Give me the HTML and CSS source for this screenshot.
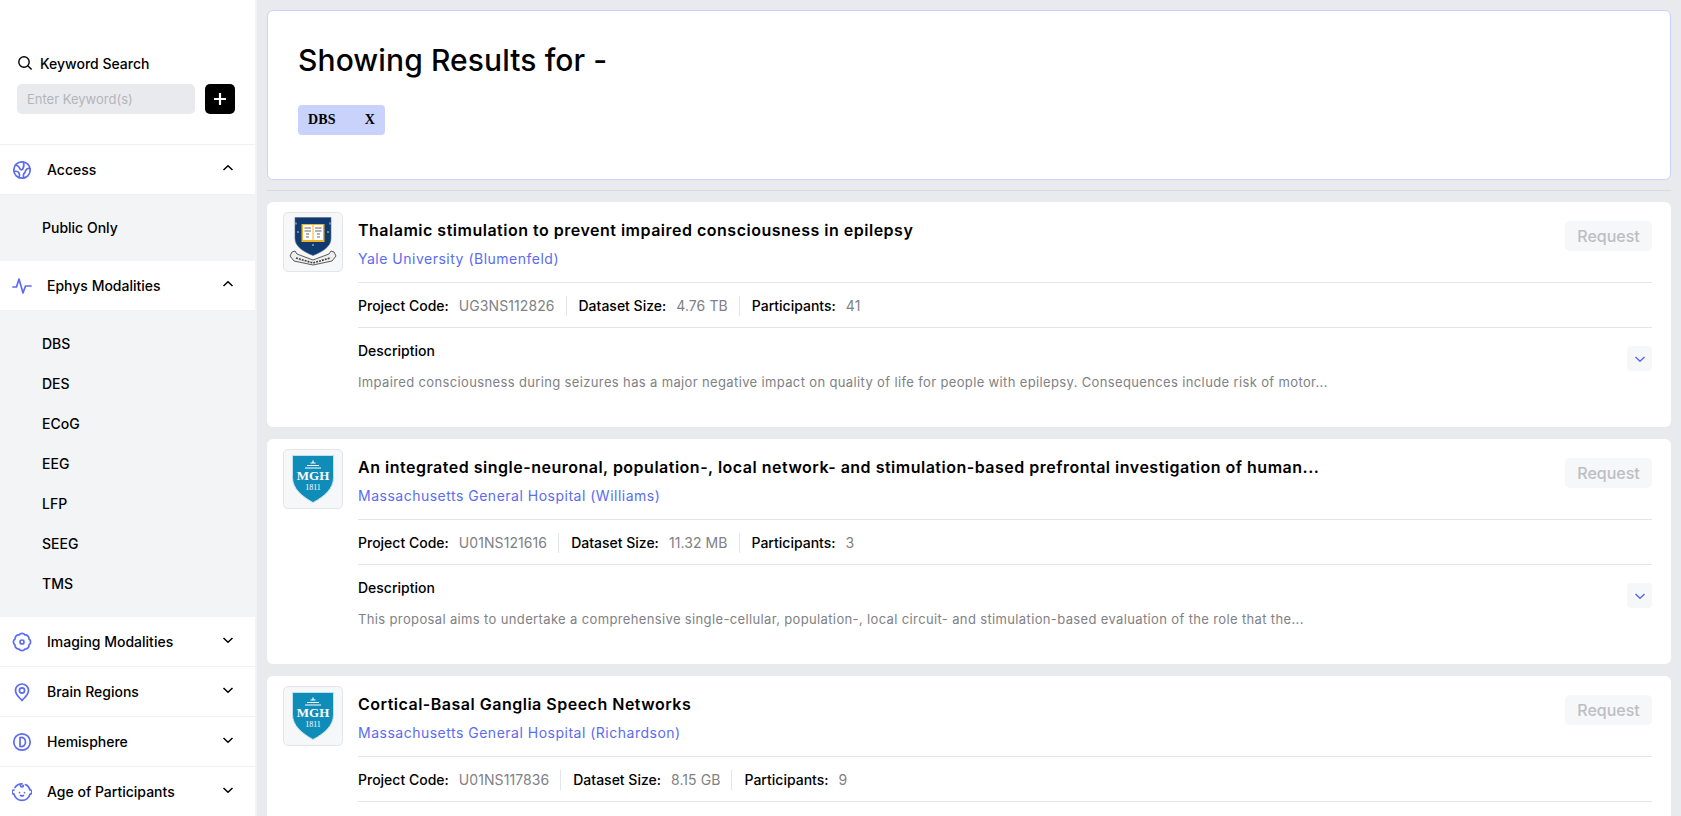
FILE: index.html
```html
<!DOCTYPE html>
<html lang="en">
<head>
    <meta charset="UTF-8">
    <title>Search Results</title>
    <link rel="stylesheet" href="styles.css">
</head>
<body>
    <div class="app">
        <aside class="sidebar">
            <div class="search">
                <div class="search-label">
                    <svg class="search-icon" viewBox="0 0 16 16" width="16" height="16"><circle cx="7" cy="7" r="5.2"/><path d="M11 11l3.6 3.6"/></svg>
                    Keyword Search
                </div>
                <div class="search-row">
                    <input class="search-input" type="text" placeholder="Enter Keyword(s)">
                    <button class="add-btn" type="button"><svg viewBox="0 0 14 14" width="14" height="14"><path d="M7 1v12M1 7h12"/></svg></button>
                </div>
            </div>

            <div class="filter">
                <svg class="filter-icon" viewBox="0 0 20 20"><circle cx="10" cy="10" r="8.2"/><path d="M3.5 5c2 .5 3.5 1 4 3s2.5 2.5 3.5.5 1-4.500.5-6.500M18 8.500c-2-.5-4 .5-4.500 2.500s-1.500 2-2 3.500 0 2.500.5 3.500M2 11.500c2-.5 4-.5 5 1.500s.5 3.500 0 4.500"/></svg>
                <span class="filter-name">Access</span>
                <svg class="chev" viewBox="0 0 12 8"><path d="M1.5 6L6 1.8 10.5 6"/></svg>
            </div>
            <div class="filter-items">
                <div class="filter-item">Public Only</div>
            </div>

            <div class="filter">
                <svg class="filter-icon" viewBox="0 0 20 20"><path d="M1 11h3.500L7 3l4 14 2.500-7H19"/></svg>
                <span class="filter-name">Ephys Modalities</span>
                <svg class="chev" viewBox="0 0 12 8"><path d="M1.5 6L6 1.8 10.5 6"/></svg>
            </div>
            <div class="filter-items">
                <div class="filter-item">DBS</div>
                <div class="filter-item">DES</div>
                <div class="filter-item">ECoG</div>
                <div class="filter-item">EEG</div>
                <div class="filter-item">LFP</div>
                <div class="filter-item">SEEG</div>
                <div class="filter-item">TMS</div>
            </div>

            <div class="filter">
                <svg class="filter-icon" viewBox="0 0 20 20"><path d="M7 3A3.600 3.600 0 0 1 13 3 3.600 3.600 0 0 1 17 7 3.600 3.600 0 0 1 17 13 3.600 3.600 0 0 1 13 17 3.600 3.600 0 0 1 7 17 3.600 3.600 0 0 1 3 13 3.600 3.600 0 0 1 3 7 3.600 3.600 0 0 1 7 3z"/><circle cx="10" cy="10" r="2"/></svg>
                <span class="filter-name">Imaging Modalities</span>
                <svg class="chev" viewBox="0 0 12 8"><path d="M1.5 2L6 6.2 10.5 2"/></svg>
            </div>
            <div class="filter">
                <svg class="filter-icon" viewBox="0 0 20 20"><path d="M10 18.500c-1.500-2-6.500-5.500-6.500-10a6.500 6.500 0 0 1 13 0c0 4.500-5 8-6.500 10z"/><circle cx="10" cy="8.500" r="2.600"/></svg>
                <span class="filter-name">Brain Regions</span>
                <svg class="chev" viewBox="0 0 12 8"><path d="M1.5 2L6 6.2 10.5 2"/></svg>
            </div>
            <div class="filter">
                <svg class="filter-icon" viewBox="0 0 20 20"><circle cx="10" cy="10" r="8.2"/><path d="M8 5.500c3.500-.5 5.500 1.500 5.500 4.500s-2 5-5.500 4.500zM8 5.500v9"/></svg>
                <span class="filter-name">Hemisphere</span>
                <svg class="chev" viewBox="0 0 12 8"><path d="M1.5 2L6 6.2 10.5 2"/></svg>
            </div>
            <div class="filter">
                <svg class="filter-icon" viewBox="0 0 20 20"><path d="M3 5.500A8.200 8.200 0 0 1 10 1.800c-2 .5-2 3 0 3.200 1.200 0 1.500-1 1-1.600M13.500 2.600a8.200 8.200 0 0 1 4.500 5.400 2 2 0 0 1 0 4 8.200 8.200 0 0 1-16 0 2 2 0 0 1 0-4"/><path d="M7.500 10.500v.1M12.500 10.500v.1M8.500 13.500c1 .6 2 .6 3 0"/></svg>
                <span class="filter-name">Age of Participants</span>
                <svg class="chev" viewBox="0 0 12 8"><path d="M1.5 2L6 6.2 10.5 2"/></svg>
            </div>
        </aside>

        <main class="main">
            <section class="results-head">
                <h1>Showing Results for -</h1>
                <span class="tag"><span>DBS</span><span>X</span></span>
            </section>
            <hr class="main-rule">

            <article class="card">
                <div class="logo">
                    <svg viewBox="0 0 48 50" width="48" height="50">
                        <path d="M6 .5h36v21c0 8-8 13-18 17C14 34.500 6 29.500 6 21.500z" fill="#0f3b70" stroke="#5f6b78" stroke-width=".6"/>
                        <path d="M12.500 7h23v18h-23z" fill="#f0b323"/>
                        <path d="M14 8h9.500v15H14zM24.500 8H34v15h-9.500z" fill="#fff"/>
                        <path d="M15.500 11h6.500M15.500 14h6.500M17 17h3M17 20h3M26 11h6.500M26 14h6.500M28 17h3M28 20h3" stroke="#555" stroke-width=".9"/>
                        <path d="M7 5.500v2M41 5.500v2M9 14v2M39 14v2M24 27v2" stroke="#cfd6df" stroke-width="1"/>
                        <path d="M3 35l3-1 2 3 16 6 16-6 2-3 3 1 2 4-4 5-19 4-19-4-4-5z" fill="#eee" stroke="#333" stroke-width=".8"/>
                        <path d="M7 41l17 5 17-5" fill="none" stroke="#444" stroke-width="1.600" stroke-dasharray="2 1"/>
                    </svg>
                </div>
                <div class="card-body">
                    <div class="card-top">
                        <div>
                            <h2>Thalamic stimulation to prevent impaired consciousness in epilepsy</h2>
                            <a class="org">Yale University (Blumenfeld)</a>
                        </div>
                        <button class="request" type="button">Request</button>
                    </div>
                    <div class="stats">
                        <div class="stat"><b>Project Code:</b> UG3NS112826</div>
                        <div class="stat"><b>Dataset Size:</b> 4.76 TB</div>
                        <div class="stat"><b>Participants:</b> 41</div>
                    </div>
                    <div class="desc">
                        <div>
                            <h3>Description</h3>
                            <p>Impaired consciousness during seizures has a major negative impact on quality of life for people with epilepsy. Consequences include risk of motor...</p>
                        </div>
                        <button class="expand" type="button"><svg viewBox="0 0 12 8" width="12" height="8"><path d="M1.5 2L6 6.2 10.5 2"/></svg></button>
                    </div>
                </div>
            </article>

            <article class="card">
                <div class="logo">
                    <svg viewBox="0 0 42 48" width="42" height="48">
                        <path d="M.5.500h41v22c0 11-9 19-20.500 25C10 41.500.5 33.500.5 22.500z" fill="#0f8cb8" stroke="#bfe0ec"/>
                        <path d="M13 13h16M15 10.500h12M18.500 8h5M21 5.500v2" stroke="#fff" stroke-width="1.200"/>
                        <text x="21" y="25" class="mgh">MGH</text>
                        <text x="21" y="35" class="mgh-year">1811</text>
                    </svg>
                </div>
                <div class="card-body">
                    <div class="card-top">
                        <div>
                            <h2>An integrated single-neuronal, population-, local network- and stimulation-based prefrontal investigation of human...</h2>
                            <a class="org">Massachusetts General Hospital (Williams)</a>
                        </div>
                        <button class="request" type="button">Request</button>
                    </div>
                    <div class="stats">
                        <div class="stat"><b>Project Code:</b> U01NS121616</div>
                        <div class="stat"><b>Dataset Size:</b> 11.32 MB</div>
                        <div class="stat"><b>Participants:</b> 3</div>
                    </div>
                    <div class="desc">
                        <div>
                            <h3>Description</h3>
                            <p>This proposal aims to undertake a comprehensive single-cellular, population-, local circuit- and stimulation-based evaluation of the role that the...</p>
                        </div>
                        <button class="expand" type="button"><svg viewBox="0 0 12 8" width="12" height="8"><path d="M1.5 2L6 6.2 10.5 2"/></svg></button>
                    </div>
                </div>
            </article>

            <article class="card">
                <div class="logo">
                    <svg viewBox="0 0 42 48" width="42" height="48">
                        <path d="M.5.500h41v22c0 11-9 19-20.500 25C10 41.500.5 33.500.5 22.500z" fill="#0f8cb8" stroke="#bfe0ec"/>
                        <path d="M13 13h16M15 10.500h12M18.500 8h5M21 5.500v2" stroke="#fff" stroke-width="1.200"/>
                        <text x="21" y="25" class="mgh">MGH</text>
                        <text x="21" y="35" class="mgh-year">1811</text>
                    </svg>
                </div>
                <div class="card-body">
                    <div class="card-top">
                        <div>
                            <h2>Cortical-Basal Ganglia Speech Networks</h2>
                            <a class="org">Massachusetts General Hospital (Richardson)</a>
                        </div>
                        <button class="request" type="button">Request</button>
                    </div>
                    <div class="stats">
                        <div class="stat"><b>Project Code:</b> U01NS117836</div>
                        <div class="stat"><b>Dataset Size:</b> 8.15 GB</div>
                        <div class="stat"><b>Participants:</b> 9</div>
                    </div>
                </div>
            </article>
        </main>
    </div>
</body>
</html>
```

FILE: styles.css
```css
* {
    box-sizing: border-box;
}
html, body {
    height: 100%;
}
body {
    margin: 0;
    overflow: hidden;
    font-family: Inter, "Liberation Sans", sans-serif;
    color: #000;
    background-color: #e9eaee;
}
.app {
    display: flex;
    height: 100vh;
    overflow: hidden;
}

/* sidebar */
.sidebar {
    flex: 0 0 257px;
    background-color: #fff;
    border-right: 2px solid #f3f4f6;
    overflow: hidden;
}
.search {
    height: 145px;
    padding: 54px 20px 0 17px;
    border-bottom: 1px solid #f0f1f3;
}
.search-label {
    display: flex;
    align-items: center;
    gap: 7px;
    height: 18px;
    font-size: 14px;
    font-weight: 500;
}
.search-icon {
    fill: none;
    stroke: #000;
    stroke-width: 1.4;
}
.search-row {
    display: flex;
    justify-content: space-between;
    margin-top: 12px;
}
.search-input {
    width: 178px;
    height: 30px;
    padding: 0 10px;
    border: none;
    border-radius: 5px;
    font-family: inherit;
    font-size: 13px;
    background-color: #e9eaee;
}
.search-input::placeholder {
    color: #b4b5b9;
}
.add-btn {
    display: flex;
    align-items: center;
    justify-content: center;
    width: 30px;
    height: 30px;
    padding: 0;
    border: none;
    border-radius: 5px;
    background-color: #000;
}
.add-btn svg {
    fill: none;
    stroke: #fff;
    stroke-width: 2.2;
}
.filter {
    display: flex;
    align-items: center;
    height: 50px;
    padding: 0 21px 0 12px;
    border-bottom: 1px solid #f0f1f3;
}
.filter-icon {
    width: 20px;
    height: 20px;
    fill: none;
    stroke: #5b6cf0;
    stroke-width: 1.7;
    stroke-linecap: round;
    stroke-linejoin: round;
}
.filter-name {
    flex: 1;
    margin-left: 15px;
    font-size: 14px;
    font-weight: 500;
}
.chev {
    width: 12px;
    height: 8px;
    margin-bottom: 4px;
    fill: none;
    stroke: #000;
    stroke-width: 1.5;
}
.filter-items {
    padding: 13px 0;
    background-color: #f3f4f6;
}
.filter-item {
    height: 40px;
    padding-left: 42px;
    font-size: 14px;
    font-weight: 500;
    line-height: 40px;
}

/* results */
.main {
    flex: 1;
    min-width: 0;
    padding: 10px 10px 0 10px;
    overflow: hidden;
}
.results-head {
    height: 170px;
    padding: 31px 30px 0;
    background-color: #fff;
    border: 1px solid #c9d2fb;
    border-radius: 6px;
}
.results-head h1 {
    margin: 0;
    font-size: 30px;
    font-weight: 500;
    line-height: 36px;
    letter-spacing: .1px;
}
.tag {
    display: inline-flex;
    justify-content: space-between;
    width: 87px;
    height: 30px;
    margin-top: 27px;
    padding: 0 10px;
    border-radius: 4px;
    font-family: "Liberation Serif", serif;
    font-size: 14px;
    font-weight: 700;
    letter-spacing: .2px;
    line-height: 30px;
    background-color: #c8d2fb;
}
.main-rule {
    height: 1px;
    margin: 10px 0 11px;
    border: none;
    background-color: #d9dade;
}
.card {
    display: flex;
    height: 225px;
    margin-bottom: 12px;
    padding: 10px 19px 0 16px;
    background-color: #fff;
    border-radius: 6px;
}
.logo {
    display: flex;
    flex: 0 0 60px;
    align-items: center;
    justify-content: center;
    width: 60px;
    height: 60px;
    background-color: #f6f7f9;
    border: 1px solid #e4e5e9;
    border-radius: 5px;
}
.mgh {
    font-family: "Liberation Serif", serif;
    font-size: 13px;
    font-weight: 700;
    text-anchor: middle;
    fill: #fff;
}
.mgh-year {
    font-family: "Liberation Serif", serif;
    font-size: 8px;
    text-anchor: middle;
    fill: #fff;
}
.card-body {
    flex: 1;
    min-width: 0;
    margin-left: 15px;
}
.card-top {
    display: flex;
    align-items: flex-start;
    justify-content: space-between;
    height: 71px;
    border-bottom: 1px solid #e4e5e9;
}
.card-top h2 {
    margin: 7px 0 0;
    font-size: 16px;
    font-weight: 600;
    line-height: 22px;
    letter-spacing: .5px;
}
.org {
    display: block;
    margin-top: 8px;
    font-size: 14px;
    letter-spacing: .5px;
    line-height: 20px;
    color: #5b6cf0;
}
.request {
    width: 87px;
    height: 30px;
    margin-top: 9px;
    border: none;
    border-radius: 5px;
    font-family: inherit;
    font-size: 16px;
    font-weight: 500;
    color: #bdbec2;
    background-color: #f6f7f9;
}
.stats {
    display: flex;
    align-items: center;
    height: 45px;
    padding-top: 2px;
    border-bottom: 1px solid #e4e5e9;
}
.stat {
    height: 20px;
    padding-right: 11px;
    margin-right: 12px;
    border-right: 1px solid #e4e5e9;
    font-size: 14px;
    letter-spacing: .08px;
    line-height: 20px;
    color: #808185;
}
.stat:last-child {
    border-right: none;
}
.stat b {
    margin-right: 6px;
    font-weight: 500;
    letter-spacing: 0;
    color: #000;
}
.desc {
    display: flex;
    justify-content: space-between;
    padding-top: 13px;
}
.desc h3 {
    margin: 0;
    font-size: 14px;
    font-weight: 500;
    line-height: 20px;
}
.desc p {
    margin: 11px 0 0;
    font-size: 13px;
    line-height: 20px;
    letter-spacing: .36px;
    color: #808185;
}
.expand {
    display: flex;
    align-items: center;
    justify-content: center;
    width: 25px;
    height: 25px;
    margin-top: 5px;
    padding: 0;
    border: none;
    border-radius: 4px;
    background-color: #f6f7f9;
}
.expand svg {
    fill: none;
    stroke: #5b6cf0;
    stroke-width: 1.5;
}
```
